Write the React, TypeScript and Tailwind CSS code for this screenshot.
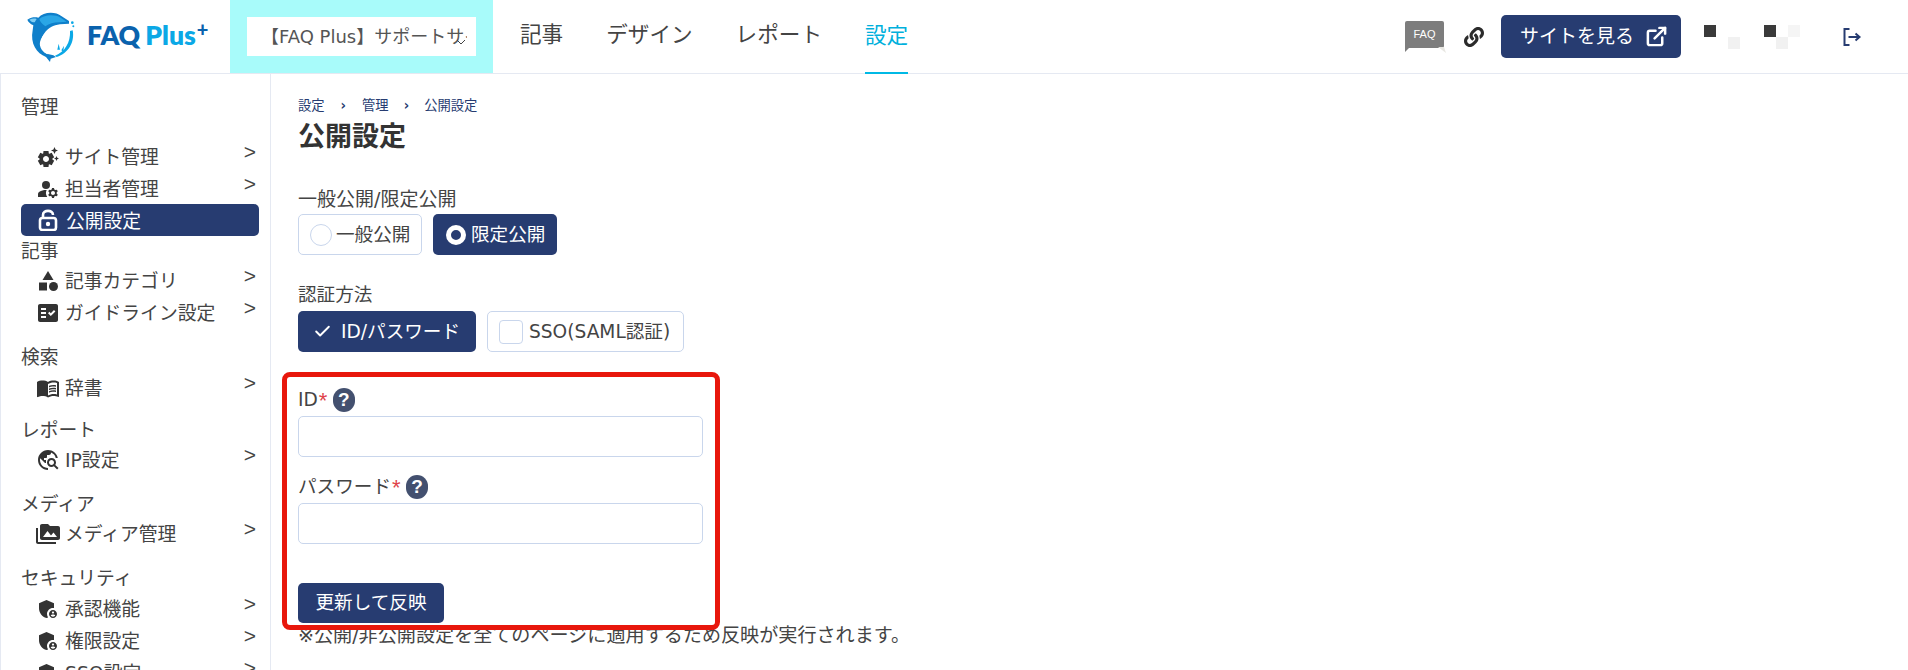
import {ReactNode} from 'react';
import {
    MdAdminPanelSettings,
    MdCategory,
    MdFactCheck,
    MdManageAccounts,
    MdMenuBook,
    MdPermMedia,
    MdSettingsSuggest,
    MdTravelExplore,
} from 'react-icons/md';
import {FaLink} from 'react-icons/fa';
import {LuCheck, LuExternalLink} from 'react-icons/lu';

const font = 'font-["DejaVu_Sans","Noto_Sans_CJK_JP",sans-serif]';

function DolphinLogo() {
    return (
        <svg width="60" height="60" viewBox="0 0 180 180" className="shrink-0">
            <path d="M22 38 C35 30 45 30 55 32 C70 15 105 12 125 28 L147 42 L147 50 L120 52 C100 55 85 62 72 80 C58 100 60 125 80 140 L100 145 L108 150 L92 155 L90 165 L78 150 C50 140 30 110 38 70 L40 55 C30 50 25 45 22 38 Z" fill="#0f7fca" />
            <path d="M58 36 C75 22 105 22 122 32 L140 44 L118 46 C100 46 88 50 76 58 C66 50 60 44 58 36 Z" fill="#2aa6e6" />
            <path d="M105 60 C85 66 65 85 60 105 C57 120 68 137 84 142 C76 127 74 110 80 96 C85 85 96 72 112 64 Z" fill="#ffffff" />
            <path d="M28 38 C36 34 44 34 50 36 L44 46 C36 46 32 43 28 38 Z" fill="#7fcdf3" />
            <path d="M158 70 C165 105 145 140 110 150 L105 146 C135 135 152 105 150 72 Z" fill="#0ba8e6" />
            <circle cx="157" cy="47" r="4" fill="#0ba8e6" />
            <circle cx="160" cy="58" r="3" fill="#0ba8e6" />
            <path d="M112 128 L116 110 L120 128 Z M124 130 L132 116 L130 134 Z" fill="#0ba8e6" />
        </svg>
    );
}

function Logo() {
    return (
        <div className="flex w-[230px] shrink-0 items-center pl-[20px]">
            <DolphinLogo />
            <div className='mb-[2px] ml-[7px] flex items-start font-["Lato",sans-serif] text-[26.5px] leading-none font-extrabold'>
                <span className="text-[#0a62ad]">FAQ</span>
                <span className="ml-[5px] text-[#0ba8e6]">Plus</span>
                <span className="-mt-[3px] ml-[1px] text-[20px] font-black text-[#0a62ad]">+</span>
            </div>
        </div>
    );
}

function FaqBubble() {
    return (
        <div className="relative flex h-[31px] w-[42px] flex-col">
            <div className="flex h-[27px] w-[39px] items-center justify-center rounded-[2px] bg-[#7d7d7d] font-['Liberation_Sans',sans-serif] text-[11px] text-white">FAQ</div>
            <svg width="42" height="7" viewBox="0 0 42 7" className="absolute top-[25px] left-0">
                <path d="M0 0 H6 L0 6 Z" fill="#7d7d7d" />
                <path d="M33 1 H39 L41 7 Z" fill="#e8e7e2" />
            </svg>
        </div>
    );
}

function Header() {
    return (
        <header className="flex h-[74px] shrink-0 items-stretch border-b border-[#e5e9f2]">
            <Logo />
            <div className="flex w-[263px] shrink-0 items-center justify-center bg-[#a8fbfa] pb-[1px]">
                <div className="relative flex h-[39px] w-[229px] items-center bg-white pr-[9px] pl-[14px]">
                    <span className="overflow-hidden text-[18px] whitespace-nowrap text-[#555]">【FAQ Plus】サポートサイト</span>
                    <svg width="10" height="6" viewBox="0 0 10 6" fill="none" stroke="#444" strokeWidth="1" className="absolute top-[22px] right-[10px]">
                        <path d="M1 1 L5 5 L9 1" />
                    </svg>
                </div>
            </div>
            <nav className="ml-[27px] flex gap-[43px] text-[21.6px] text-[#444]">
                <div className="flex items-center pb-[2px]">記事</div>
                <div className="flex items-center pb-[2px]">デザイン</div>
                <div className="flex items-center pb-[2px]">レポート</div>
                <div className="-mb-px flex items-center border-b-[2px] border-[#00b9e5] text-[#00b0dc]">設定</div>
            </nav>
            <div className="ml-auto flex items-center pr-[46px]">
                <FaqBubble />
                <FaLink className="ml-[17px] text-[20px] text-[#2b2b2b]" />
                <button className="ml-[17px] flex h-[43px] w-[180px] items-center justify-center gap-[11px] rounded-[5px] bg-[#273c71] pl-[6px] text-[19px] text-white">
                    サイトを見る
                    <LuExternalLink className="text-[23px]" strokeWidth={2.6} />
                </button>
                <div className="ml-[23px] grid h-[24px] w-[95px] grid-cols-[repeat(8,12px)] grid-rows-2">
                    <div className="bg-[#3a3a3a]" />
                    <div />
                    <div className="col-start-3 row-start-2 bg-[#f1f1f1]" />
                    <div className="col-start-6 row-start-1 bg-[#3a3a3a]" />
                    <div className="col-start-7 row-start-2 bg-[#f1f1f1]" />
                    <div className="col-start-8 row-start-1 bg-[#f5f5f5]" />
                </div>
                <svg width="20" height="20" viewBox="0 0 19 20" fill="none" stroke="#273c71" strokeWidth="2" className="ml-[43px]">
                    <path d="M7 2 H2 V18 H7" />
                    <path d="M6 10 H17 M13 6.5 L17 10 L13 13.5" />
                </svg>
            </div>
        </header>
    );
}

function OpenLock() {
    return (
        <svg width="20" height="22" viewBox="0 0 20 22" fill="none" stroke="#fff" strokeWidth="2.6">
            <path d="M5 9 V6 C5 0.5 15 0.5 15 6" />
            <rect x="2" y="9" width="16" height="12" rx="2.5" />
            <circle cx="10" cy="15" r="2.2" fill="#fff" stroke="none" />
        </svg>
    );
}

type ItemProps = {
    icon: ReactNode;
    label: string;
    active?: boolean;
    className?: string;
};

function SideItem({icon, label, active, className}: ItemProps) {
    if (active) {
        return (
            <div className={`flex h-[32px] items-center rounded-[5px] bg-[#273c71] pl-[17px] text-white ${className ?? ''}`}>
                <span className="flex w-[28px] shrink-0 justify-start">{icon}</span>
                <span className="pt-[4px]">{label}</span>
            </div>
        );
    }
    return (
        <div className={`flex h-[32px] items-center pt-[2px] pl-[15px] ${className ?? ''}`}>
            <span className="flex w-[29px] shrink-0 items-center text-[24px] text-[#333]">{icon}</span>
            <span className="pt-[2px]">{label}</span>
            <span className="mr-[3px] ml-auto -translate-y-[5px] font-['Liberation_Sans',sans-serif] text-[21px]">&gt;</span>
        </div>
    );
}

function GroupLabel({label, className}: {label: string; className?: string}) {
    return <div className={`flex h-[28px] items-center pt-[4px] ${className ?? ''}`}>{label}</div>;
}

function Sidebar() {
    return (
        <aside className="h-[596px] w-[271px] shrink-0 overflow-hidden border-x border-[#e5e9f2] pr-[11px] pl-[20px] text-[18.8px] text-[#444]">
            <GroupLabel className="mt-[18px]" label="管理" />
            <SideItem className="mt-[20px]" icon={<MdSettingsSuggest />} label="サイト管理" />
            <SideItem icon={<MdManageAccounts />} label="担当者管理" />
            <SideItem active icon={<OpenLock />} label="公開設定" />
            <GroupLabel label="記事" />
            <SideItem icon={<MdCategory />} label="記事カテゴリ" />
            <SideItem icon={<MdFactCheck />} label="ガイドライン設定" />
            <GroupLabel className="mt-[14px]" label="検索" />
            <SideItem className="mt-[1px]" icon={<MdMenuBook />} label="辞書" />
            <GroupLabel className="mt-[12px]" label="レポート" />
            <SideItem icon={<MdTravelExplore />} label="IP設定" />
            <GroupLabel className="mt-[14px]" label="メディア" />
            <SideItem icon={<MdPermMedia />} label="メディア管理" />
            <GroupLabel className="mt-[14px]" label="セキュリティ" />
            <SideItem className="mt-[1px]" icon={<MdAdminPanelSettings />} label="承認機能" />
            <SideItem icon={<MdAdminPanelSettings />} label="権限設定" />
            <SideItem icon={<MdAdminPanelSettings />} label="SSO設定" />
        </aside>
    );
}

function Breadcrumb() {
    return (
        <div className="flex h-[16px] items-center text-[13.3px] text-[#273c71]">
            <span>設定</span>
            <span className="mx-[16px] font-bold">›</span>
            <span>管理</span>
            <span className="mx-[15px] font-bold">›</span>
            <span>公開設定</span>
        </div>
    );
}

function Help() {
    return (
        <span className="ml-[2px] flex h-[24px] w-[22px] items-center justify-center rounded-full bg-[#43506f] font-['Liberation_Sans',sans-serif] text-[19px] font-bold text-white">?</span>
    );
}

function Field({label, className}: {label: string; className?: string}) {
    return (
        <div className={className}>
            <div className="flex h-[28px] items-center">
                {label}
                <span className="w-[13px] pl-[1px] font-['Liberation_Sans',sans-serif] text-[22px] text-[#e0434b]">*</span>
                <Help />
            </div>
            <div className="mt-[2px] h-[41px] rounded-[5px] border border-[#c9d6ec] bg-white" />
        </div>
    );
}

function Main() {
    return (
        <main className="flex-1 pt-[24px] pl-[27px] text-[18.6px] text-[#444]">
            <Breadcrumb />
            <h1 className="mt-[4px] flex h-[38px] items-center text-[27px] font-bold text-[#333]">公開設定</h1>
            <div className="mt-[29px] flex h-[28px] items-center text-[19px]">一般公開/限定公開</div>
            <div className="mt-[1px] flex gap-[11px]">
                <div className="flex h-[41px] w-[124px] items-center rounded-[5px] border border-[#c9d6ec] pl-[11px]">
                    <span className="mr-[4px] h-[22px] w-[22px] rounded-full border border-[#c9d6ec]" />
                    一般公開
                </div>
                <div className="flex h-[41px] w-[124px] items-center rounded-[5px] bg-[#273c71] pl-[13px] text-white">
                    <span className="mr-[5px] h-[20px] w-[20px] rounded-full border-[5px] border-white" />
                    限定公開
                </div>
            </div>
            <div className="mt-[26px] flex h-[28px] items-center">認証方法</div>
            <div className="mt-[2px] flex gap-[11px]">
                <div className="flex h-[41px] w-[178px] items-center rounded-[5px] bg-[#273c71] pl-[15px] text-white">
                    <LuCheck className="mr-[9px] text-[19px]" strokeWidth={2.4} />
                    ID/パスワード
                </div>
                <div className="flex h-[41px] w-[197px] items-center rounded-[5px] border border-[#c9d6ec] pl-[11px]">
                    <span className="mr-[6px] h-[24px] w-[24px] rounded-[4px] border border-[#c9d6ec]" />
                    SSO(SAML認証)
                </div>
            </div>
            <div className="relative mt-[34px] w-[405px]">
                <Field label="ID" />
                <Field className="mt-[16px]" label="パスワード" />
                <button className="mt-[39px] flex h-[40px] w-[146px] items-center justify-center rounded-[5px] bg-[#273c71] text-white">更新して反映</button>
                <div className="pointer-events-none absolute -top-[14px] -right-[17px] -bottom-[7px] -left-[16px] rounded-[8px] border-[5px] border-[#e8170c]" />
            </div>
            <p className="mt-[2px] text-[19.1px] leading-[22px]">※公開/非公開設定を全てのページに適用するため反映が実行されます。</p>
        </main>
    );
}

export default function App() {
    return (
        <div className={`flex h-[670px] w-[1908px] flex-col overflow-hidden rounded-t-[10px] bg-white ${font}`}>
            <Header />
            <div className="flex min-h-0 flex-1">
                <Sidebar />
                <Main />
            </div>
        </div>
    );
}
